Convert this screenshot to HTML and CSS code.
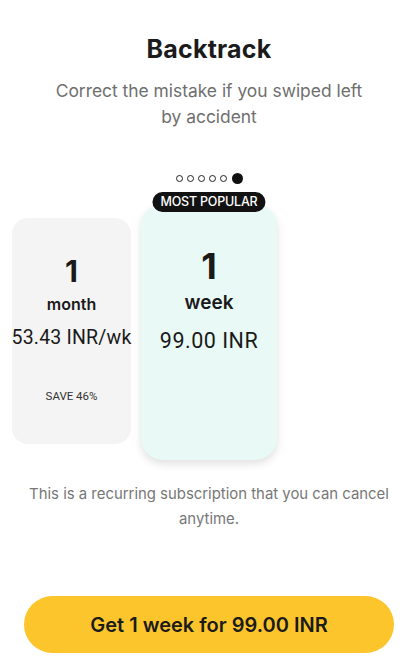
FILE: index.html
```html
<!DOCTYPE html>
<html>
<head>
<meta charset="utf-8">
<link rel="stylesheet" href="styles.css">
</head>
<body>
<main class="screen">
  <h1 class="title">Backtrack</h1>
  <p class="subtitle">Correct the mistake if you swiped left<br>by accident</p>
  <div class="dots">
    <span class="dot"></span><span class="dot"></span><span class="dot"></span><span class="dot"></span><span class="dot"></span><span class="dot active"></span>
  </div>
  <div class="plans">
    <div class="card card-month">
      <div class="num">1</div>
      <div class="unit">month</div>
      <div class="price">53.43 INR/wk</div>
      <div class="save">SAVE 46%</div>
    </div>
    <div class="card card-week">
      <div class="badge">MOST POPULAR</div>
      <div class="num">1</div>
      <div class="unit">week</div>
      <div class="price">99.00 INR</div>
    </div>
  </div>
  <p class="note">This is a recurring subscription that you can cancel anytime.</p>
  <button class="cta">Get 1 week for 99.00 INR</button>
</main>
</body>
</html>
```
FILE: styles.css
```css
* { box-sizing: border-box; }
html, body { margin: 0; padding: 0; background: #fff; }
body { width: 418px; height: 667px; overflow: hidden; font-family: "Inter", "Noto Sans", sans-serif; color: #1a1a1a; }
.screen { display: flex; flex-direction: column; align-items: center; padding-top: 32px; }
.title { margin: 0; font-size: 25px; line-height: 34px; font-weight: 700; letter-spacing: 0.2px; color: #1b1b1b; }
.subtitle { margin: 12px 0 0; font-size: 17.4px; line-height: 26px; text-align: center; color: #6f6f6f; font-weight: 400; }
.dots { display: flex; align-items: center; gap: 4px; margin-top: 42px; height: 12px; }
.dot { width: 7px; height: 7px; border-radius: 50%; border: 1.3px solid #222; }
.dot.active { width: 11px; height: 11px; background: #111; border: none; margin-left: 1px; }
.plans { align-self: stretch; display: flex; align-items: flex-start; gap: 10px; padding-left: 12px; margin-top: 20px; }
.card { display: flex; flex-direction: column; align-items: center; position: relative; }
.card-month { width: 119px; height: 226px; margin-top: 14px; background: #f4f4f4; border-radius: 16px; padding-top: 38px; }
.card-week { width: 136px; height: 256px; background: #e9f9f6; border-radius: 22px; padding-top: 44px; box-shadow: 0 4px 8px rgba(0,0,0,0.12); }
.badge { position: absolute; top: -12px; left: 50%; transform: translateX(-50%); background: #121212; color: #fff; font-size: 12.5px; line-height: 20px; height: 20px; padding: 0 8px; border-radius: 10px; white-space: nowrap; font-weight: 500; letter-spacing: -0.2px; }
.num { font-weight: 700; line-height: 1; }
.card-month .num { font-size: 30px; }
.card-week .num { font-size: 36px; }
.unit { font-weight: 600; }
.card-month .unit { font-size: 16px; margin-top: 8px; }
.card-week .unit { font-size: 19px; margin-top: 7px; }
.price { font-family: "Roboto", sans-serif; white-space: nowrap; color: #1a1a1a; }
.card-month .price { font-size: 19.5px; margin-top: 12px; letter-spacing: 0.2px; }
.card-week .price { font-size: 21.5px; margin-top: 14px; letter-spacing: 0.5px; }
.save { font-family: "Roboto", sans-serif; font-size: 11.5px; margin-top: 40px; color: #333; }
.note { margin: 22px 0 0; width: 390px; font-size: 14.9px; line-height: 25px; text-align: center; color: #777; }
.cta { margin-top: 64px; width: 370px; height: 57px; border: none; border-radius: 29px; background: #fdc52c; font-family: "Inter", sans-serif; font-size: 20px; font-weight: 600; color: #1b1b1b; }
```
